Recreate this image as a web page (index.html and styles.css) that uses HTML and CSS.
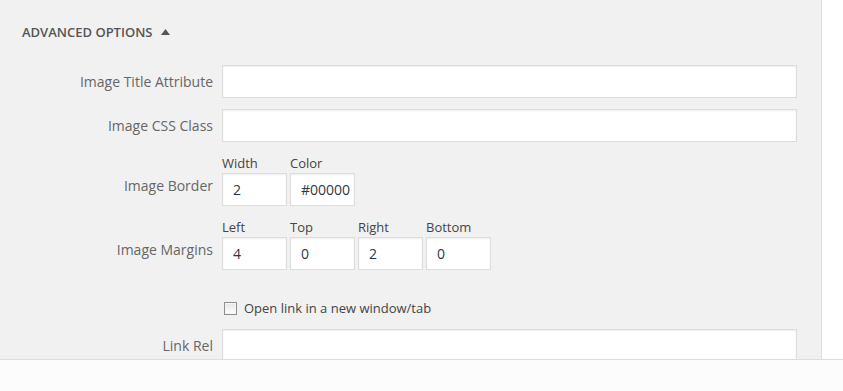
FILE: index.html
```html
<!DOCTYPE html>
<html lang="en">
<head>
    <meta charset="UTF-8">
    <meta name="viewport" content="width=device-width, initial-scale=1.0">
    <title>Advanced Options</title>
    <link rel="stylesheet" href="styles.css">
</head>
<body>
    <div class="panel">
        <h3 class="section-title">
            Advanced Options
            <svg class="toggle" width="9" height="6" viewBox="0 0 9 6"><polygon points="4.5,0 9,6 0,6" fill="#555"/></svg>
        </h3>

        <div class="form">
            <div class="row">
                <label class="label">Image Title Attribute</label>
                <input class="text-input" type="text">
            </div>

            <div class="row">
                <label class="label">Image CSS Class</label>
                <input class="text-input" type="text">
            </div>

            <div class="row row-group">
                <label class="label">Image Border</label>
                <div class="fields">
                    <div class="field">
                        <span class="sub-label">Width</span>
                        <input class="small-input" type="text" value="2">
                    </div>
                    <div class="field">
                        <span class="sub-label">Color</span>
                        <input class="small-input" type="text" value="#00000">
                    </div>
                </div>
            </div>

            <div class="row row-group">
                <label class="label">Image Margins</label>
                <div class="fields">
                    <div class="field">
                        <span class="sub-label">Left</span>
                        <input class="small-input" type="text" value="4">
                    </div>
                    <div class="field">
                        <span class="sub-label">Top</span>
                        <input class="small-input" type="text" value="0">
                    </div>
                    <div class="field">
                        <span class="sub-label">Right</span>
                        <input class="small-input" type="text" value="2">
                    </div>
                    <div class="field">
                        <span class="sub-label">Bottom</span>
                        <input class="small-input" type="text" value="0">
                    </div>
                </div>
            </div>

            <div class="row row-check">
                <span></span>
                <label class="check">
                    <input class="checkbox" type="checkbox">
                    Open link in a new window/tab
                </label>
            </div>

            <div class="row">
                <label class="label">Link Rel</label>
                <input class="text-input" type="text">
            </div>
        </div>
    </div>

    <div class="footer"></div>
</body>
</html>
```

FILE: styles.css
```css
:root {
    --panel-bg: #f1f1f1;
    --border: #dddddd;
    --label: #666666;
    --text: #32373c;
}

html, body {
    height: 100%;
}

body {
    margin: 0;
    font-family: 'Open Sans', 'Noto Sans', sans-serif;
    font-size: 13px;
    color: var(--text);
    background: #ffffff;
    overflow: hidden;
}

.panel {
    width: 822px;
    height: 100%;
    background: var(--panel-bg);
    border-right: 1px solid var(--border);
    box-sizing: border-box;
}

.section-title {
    margin: 0;
    padding: 22px 0 0 22px;
    height: 42px;
    box-sizing: border-box;
    font-size: 13px;
    font-weight: 600;
    line-height: 20px;
    text-transform: uppercase;
    color: #555555;
    display: flex;
    align-items: center;
}

.toggle {
    margin-left: 8px;
    margin-top: -1px;
}

.form {
    padding-top: 23px;
    display: flex;
    flex-direction: column;
    gap: 11px;
}

.row {
    display: grid;
    grid-template-columns: 213px 575px;
    column-gap: 9px;
    align-items: center;
}

.label {
    text-align: right;
    color: var(--label);
    font-size: 14px;
    line-height: 20px;
}

.row-group .label {
    align-self: end;
    padding-bottom: 10px;
}

.text-input,
.small-input {
    height: 33px;
    box-sizing: border-box;
    border: 1px solid var(--border);
    box-shadow: inset 0 1px 2px rgba(0, 0, 0, 0.07);
    background: #ffffff;
    font-family: inherit;
    font-size: 14px;
    color: var(--text);
    padding: 0 10px;
    margin: 0;
    outline: none;
}

.text-input {
    width: 575px;
}

.fields {
    display: flex;
    gap: 3px;
}

.field {
    display: flex;
    flex-direction: column;
}

.sub-label {
    line-height: 20px;
    color: #444444;
}

.small-input {
    width: 65px;
    padding-right: 2px;
}

.row-check {
    margin-top: 17px;
}

.check {
    display: flex;
    align-items: center;
    gap: 7px;
    line-height: 20px;
    color: #444444;
}

.checkbox {
    appearance: none;
    -webkit-appearance: none;
    width: 13px;
    height: 13px;
    margin: 0 0 0 2px;
    border: 1px solid #8f8f8f;
    background: linear-gradient(#e6e6e6, #ffffff);
    box-shadow: inset 0 0 0 1px #f4f4f4;
    box-sizing: border-box;
}

.footer {
    position: fixed;
    left: 0;
    right: 0;
    bottom: 0;
    height: 31px;
    background: #fcfcfc;
    border-top: 1px solid var(--border);
}
```
